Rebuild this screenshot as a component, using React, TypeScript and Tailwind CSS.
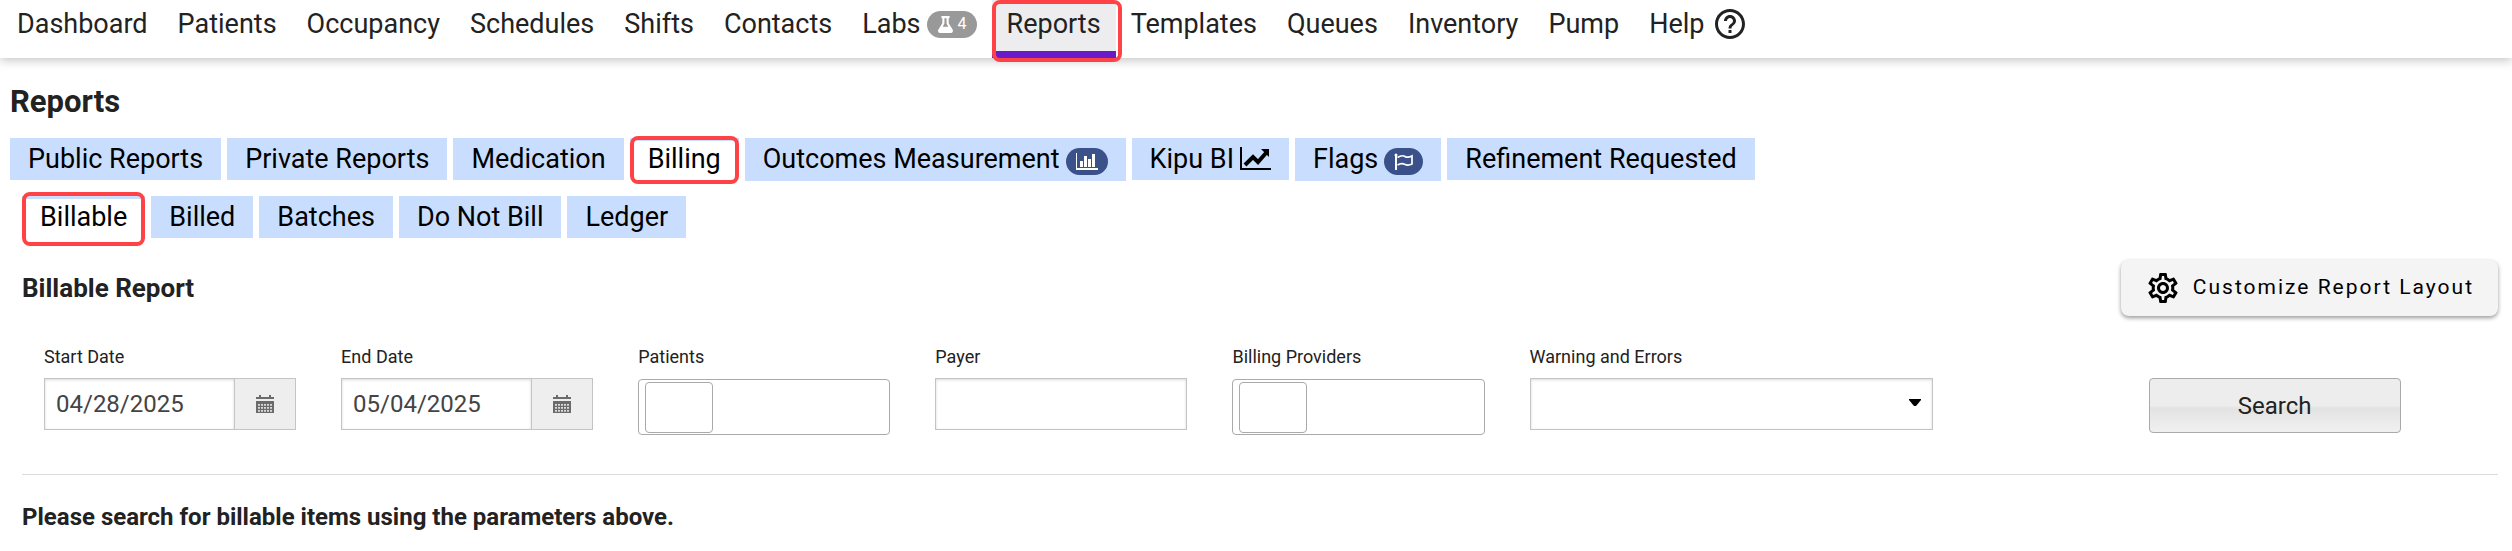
import type { ReactNode } from "react"
import { FaFlask } from "react-icons/fa"
import { MdHelpOutline, MdOutlineSettings } from "react-icons/md"

const navBefore = ["Dashboard", "Patients", "Occupancy", "Schedules", "Shifts", "Contacts"]
const navAfter = ["Templates", "Queues", "Inventory", "Pump"]

function ChartIcon() {
  return (
    <svg viewBox="0 0 22 17" className="h-[17px] w-[22px]" fill="currentColor" shapeRendering="crispEdges">
      <path d="M0 0h1v15h21v2H0zM4 8h3v6H4zM8 3h3v11H8zM12 6h3v8h-3zM16 1h3v13h-3z" />
    </svg>
  )
}

function TrendIcon() {
  return (
    <svg viewBox="0 0 31 24" className="mt-[9px] ml-[6px] h-6 w-[31px]" fill="none" stroke="currentColor">
      <path d="M1 0v22h30" strokeWidth="2" />
      <path d="M5 18l8-8 5 5 8-9" strokeWidth="4" />
      <path d="M21 2h8v8z" fill="currentColor" stroke="none" />
    </svg>
  )
}

function FlagIcon() {
  return (
    <svg viewBox="0 0 19 17" className="h-[17px] w-[19px]" fill="none" stroke="currentColor">
      <circle cx="2" cy="2" r="1.5" fill="currentColor" stroke="none" />
      <path d="M2 1v16" strokeWidth="2" />
      <path d="M3.5 4.5c3-2 5-2.500 7.500-1s4 1 7-.5v8c-3 1.500-5 1.500-7.500.2s-4.500-.7-7 .8" strokeWidth="1.700" />
    </svg>
  )
}

function CalendarIcon() {
  return (
    <svg viewBox="0 0 18 18" className="size-[18px]" fill="#6b6b6b">
      <path d="M3 0h2v2h8V0h2v2h3v2H0V2h3z" />
      <path d="M0 6h18v12H0z" />
      <path d="M3 9v9M6 9v9M9 9v9M12 9v9M15 9v9" stroke="#eee" strokeWidth="1.700" strokeDasharray="1.700 1.300" />
    </svg>
  )
}

function NavLink({ children }: { children: ReactNode }) {
  return (
    <a href="#" className="flex h-12 items-center px-[15px]">
      {children}
    </a>
  )
}

function Tab({ children }: { children: ReactNode }) {
  return (
    <a href="#" className="flex items-start bg-[#c9deff] px-[18px] leading-[42px]">
      {children}
    </a>
  )
}

function ActiveTab({ children, ring }: { children: ReactNode; ring: string }) {
  return (
    <a href="#" className="relative flex h-[42px] items-center border-t-[3px] border-[#c9deff] bg-white px-[18px] pb-[3px]">
      {children}
      <span className={`absolute inset-x-0 rounded-lg border-4 border-[#ff4245] ${ring}`} />
    </a>
  )
}

function Pill({ children }: { children: ReactNode }) {
  return (
    <span className="mt-[10px] mb-[6px] ml-[6px] flex h-[27px] items-center rounded-full bg-[#3b5189] px-[10px] text-white">
      {children}
    </span>
  )
}

function DateField({ id, label, value }: { id: string; label: string; value: string }) {
  return (
    <div className="w-[12%] pr-[23px] pl-[22px]">
      <label htmlFor={id} className="block text-lg leading-6">
        {label}
      </label>
      <div className="mt-[9px] flex h-[52px] border border-[#c4c4c4]">
        <input
          id={id}
          defaultValue={value}
          className="w-full min-w-0 flex-1 px-[11px] text-2xl text-[#444] shadow-[inset_0_1px_3px_rgba(0,0,0,0.15)]"
        />
        <button
          type="button"
          aria-label={`Pick ${label}`}
          className="flex w-[61px] items-center justify-center border-l border-[#c4c4c4] bg-[#eee]"
        >
          <CalendarIcon />
        </button>
      </div>
    </div>
  )
}

function MultiField({ id, label }: { id: string; label: string }) {
  return (
    <div className="w-[12%] pr-[23px] pl-[22px]">
      <label htmlFor={id} className="block text-lg leading-6">
        {label}
      </label>
      <div className="mt-[10px] flex h-14 items-center rounded-[4px] border border-[#aaa] px-[6px]">
        <input id={id} className="h-[51px] w-[68px] rounded-[4px] border border-[#aaa] px-2 text-2xl" />
      </div>
    </div>
  )
}

export default function App() {
  return (
    <div className="min-h-screen bg-white font-['Roboto',sans-serif] text-[#222]">
      <nav className="flex h-[58px] items-start px-[2px] text-[27px] shadow-[0_2px_10px_rgba(0,0,0,0.25)]">
        {navBefore.map((item) => (
          <NavLink key={item}>{item}</NavLink>
        ))}
        <NavLink>
          Labs
          <span className="ml-[6px] flex h-[27px] items-center gap-1 rounded-full bg-[#999] px-[10px] text-base text-white">
            <FaFlask className="size-[17px]" />4
          </span>
        </NavLink>
        <a href="#" className="relative flex h-[58px] border-b-[7px] border-[#6a1bc9] bg-[#ededf0] px-[15px]">
          <span className="flex h-12 items-center">Reports</span>
          <span className="absolute top-0 -right-[6px] -bottom-[11px] left-0 rounded-lg border-4 border-[#ff4245]" />
        </a>
        {navAfter.map((item) => (
          <NavLink key={item}>{item}</NavLink>
        ))}
        <NavLink>
          Help
          <MdHelpOutline className="ml-2 size-9" />
        </NavLink>
      </nav>

      <main className="px-[10px]">
        <h1 className="mt-[26px] text-[31px] leading-9 font-bold">Reports</h1>

        <div className="mt-[18px] flex h-[42px] items-start gap-[6px] text-[27px] text-black">
          <Tab>Public Reports</Tab>
          <Tab>Private Reports</Tab>
          <Tab>Medication</Tab>
          <ActiveTab ring="-top-[5px] -bottom-1">Billing</ActiveTab>
          <Tab>
            Outcomes Measurement
            <Pill>
              <ChartIcon />
            </Pill>
          </Tab>
          <Tab>
            Kipu BI
            <TrendIcon />
          </Tab>
          <Tab>
            Flags
            <Pill>
              <FlagIcon />
            </Pill>
          </Tab>
          <Tab>Refinement Requested</Tab>
        </div>

        <div className="mt-4 ml-3 flex items-start gap-[6px] text-[27px] text-black">
          <ActiveTab ring="-top-[7px] -bottom-2">Billable</ActiveTab>
          <Tab>Billed</Tab>
          <Tab>Batches</Tab>
          <Tab>Do Not Bill</Tab>
          <Tab>Ledger</Tab>
        </div>

        <section className="mt-[22px] mr-1 ml-3">
          <div className="flex h-14 items-center justify-between">
            <h2 className="text-[26px] font-bold">Billable Report</h2>
            <button
              type="button"
              className="flex h-14 items-center gap-3 rounded-lg bg-[#f4f4f4] px-6 text-[21px] tracking-[2px] text-black shadow-[0_2px_4px_rgba(0,0,0,0.4)]"
            >
              <MdOutlineSettings className="size-9" />
              Customize Report Layout
            </button>
          </div>

          <form className="mt-[29px] flex h-[130px] items-start border-b border-[#ddd]">
            <DateField id="start" label="Start Date" value="04/28/2025" />
            <DateField id="end" label="End Date" value="05/04/2025" />
            <MultiField id="patients" label="Patients" />
            <div className="w-[12%] pr-[23px] pl-[22px]">
              <label htmlFor="payer" className="block text-lg leading-6">
                Payer
              </label>
              <input
                id="payer"
                className="mt-[9px] h-[52px] w-full border border-[#c4c4c4] px-[11px] text-2xl shadow-[inset_0_1px_3px_rgba(0,0,0,0.15)]"
              />
            </div>
            <MultiField id="providers" label="Billing Providers" />
            <div className="relative w-[18%] pr-5 pl-[22px]">
              <label htmlFor="warnings" className="block text-lg leading-6">
                Warning and Errors
              </label>
              <select
                id="warnings"
                className="mt-[9px] block h-[52px] w-full appearance-none border border-[#c4c4c4] px-[11px] text-2xl shadow-[inset_0_1px_3px_rgba(0,0,0,0.15)]"
              >
                <option></option>
              </select>
              <svg viewBox="0 0 12 7" className="pointer-events-none absolute right-8 bottom-6 h-[7px] w-3">
                <path d="M0 0h12v1L7 7H5L0 1z" />
              </svg>
            </div>
            <div className="ml-[7%] w-[12%] pt-[33px] pr-[23px] pl-[22px]">
              <button
                type="button"
                className="h-[55px] w-full rounded-[4px] border border-[#aaa] bg-linear-to-b from-[#ededed] from-50% via-[#e3e3e3] via-55% to-[#f0f0f0] text-2xl"
              >
                Search
              </button>
            </div>
          </form>

          <p className="mt-[26px] text-2xl font-bold">Please search for billable items using the parameters above.</p>
        </section>
      </main>
    </div>
  )
}
